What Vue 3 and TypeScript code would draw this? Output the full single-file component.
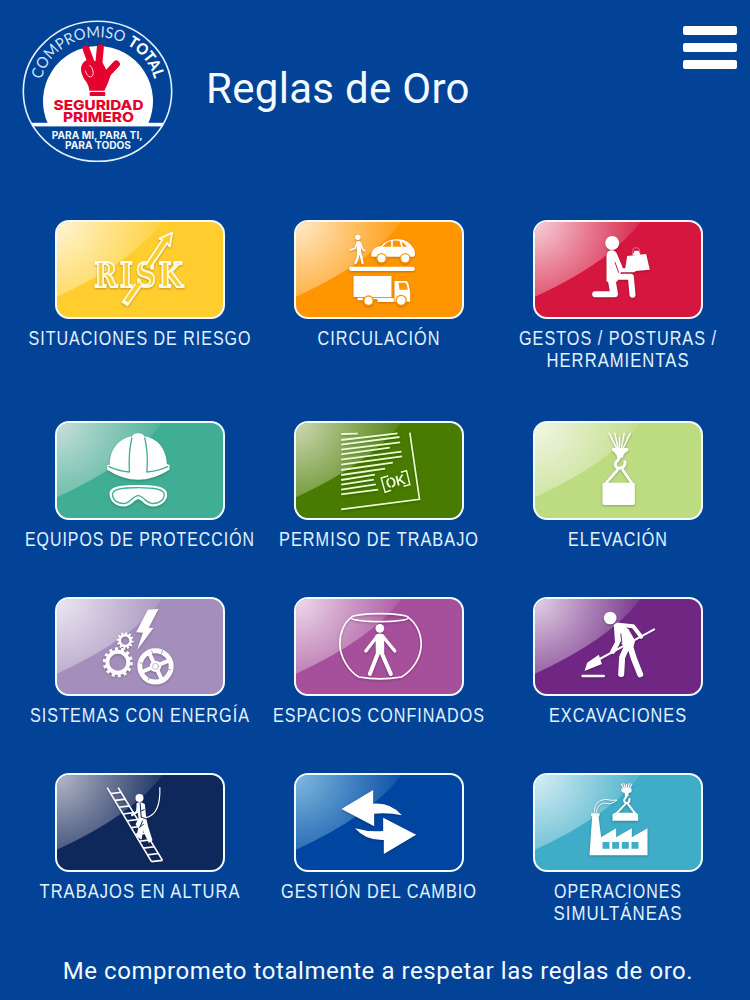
<template>
  <div class="page">
    <header class="header">
      <svg class="logo" viewBox="20 18 156 146" width="156" height="146">
        <defs>
          <path id="logo-arc" d="M41.5 79.5A58 54.5 0 0 1 154.5 79.5" />
        </defs>
        <ellipse class="ring" cx="97.5" cy="91.3" rx="74.2" ry="70" />
        <path class="white" d="M48 124A55 55 0 1 1 148 124Z" />
        <rect class="white" x="32" y="122.8" width="131" height="3.6" />
        <text class="arc-light" textLength="102" lengthAdjust="spacingAndGlyphs">
          <textPath href="#logo-arc">COMPROMISO</textPath>
        </text>
        <text class="arc-bold" textLength="45" lengthAdjust="spacingAndGlyphs">
          <textPath href="#logo-arc" startOffset="106">TOTAL</textPath>
        </text>
        <!-- Hand with three raised fingers -->
        <g transform="translate(10 10) scale(0.3333)">
          <path class="finger" d="M228 116L250 176M271 113L265 176M319 162L280 204" />
          <path class="red" d="M218 160Q232 142 250 152L278 158L292 186L306 182Q296 218 283 242H238Q237 224 222 206Q206 180 218 160Z" />
          <path class="crease" d="M226 182Q230 198 241 201Q252 199 249 183Q246 170 238 165" />
          <rect class="red" x="239" y="246" width="47" height="12" rx="3" />
        </g>
        <text class="safety" x="98.5" y="110" textLength="90" lengthAdjust="spacingAndGlyphs">SEGURIDAD</text>
        <text class="safety" x="98.5" y="122.3" textLength="71" lengthAdjust="spacingAndGlyphs">PRIMERO</text>
        <text class="motto" x="97.2" y="139" textLength="91" lengthAdjust="spacingAndGlyphs">PARA MI, PARA TI,</text>
        <text class="motto" x="98" y="149.4" textLength="66" lengthAdjust="spacingAndGlyphs">PARA TODOS</text>
      </svg>
      <h1 class="title">Reglas de Oro</h1>
      <button class="menu" aria-label="Menú" @click="menuOpen = !menuOpen">
        <span></span>
        <span></span>
        <span></span>
      </button>
    </header>

    <main class="rules">
      <div v-for="rule in rules" :key="rule.id" class="rule">
        <div class="tile" :class="rule.id">
          <svg class="icon" :viewBox="rule.viewBox" width="170" height="99">
            <g v-if="rule.id === 'risk'">
              <text class="risk-text" transform="scale(0.84 1)" x="191 283 340 421" y="231">RISK</text>
              <path class="outline" d="M252 283L292 226M322 170L377 88" />
              <path class="inner" d="M258 274L295 221M319 174L377 88" />
              <path class="hollow" d="M356 86L395 68L388 110L379 99L366 90Z" />
              <path class="inner" d="M360 113L375 91" />
            </g>

            <g v-else-if="rule.id === 'traffic'">
              <circle cx="232" cy="82" r="8" />
              <path class="s5" d="M229 99L224 115L209 120M240 99L246 117L252 122" />
              <path class="s12" d="M234 99L236 126" />
              <path class="s7" d="M233 128L232 142L225 159M238 128L243 142L246 159" />
              <path d="M272 136C273 117 288 110 302 108C315 92 335 88 352 88C378 88 390 103 396 111C404 119 406 138 400 140H273Z" />
              <path class="cut" d="M306 110L318 98Q326 94 332 93V110ZM337 92Q350 91 357 93L362 110H337ZM363 95Q373 99 379 110H367Z" />
              <circle class="wheel" cx="303" cy="145" r="14" />
              <circle class="wheel" cx="374" cy="145" r="14" />
              <rect x="206" y="170" width="197" height="13" rx="6" />
              <path d="M219 198H333V261H219ZM342 213H376Q384 214 386 231L389 245V275H342Z" />
              <path class="cut" d="M354 218H374Q379 220 382 239H357Z" />
              <path d="M231 263H247V271H231ZM278 263H333V268H278ZM291 265H340V276H291Z" />
              <circle class="wheel" cx="264" cy="272" r="14" />
              <circle class="wheel" cx="362" cy="271" r="15" />
            </g>

            <g v-else-if="rule.id === 'gestures'">
              <circle cx="305" cy="99" r="21" />
              <path d="M288 138Q289 122 303 121Q316 121 320 134L336 172L330 190L320 215H288Z" />
              <path class="s12" d="M314 135L332 181H370" />
              <path class="s18" d="M300 200H361L366 254" />
              <path class="s24" d="M302 200L310 247" />
              <path class="s18" d="M254 253H313" />
              <path class="slit" d="M314 158L324 187" />
              <path d="M350 138L407 132L418 179L375 183L344 176Z" />
              <path class="handle" d="M366 134V124Q368 113 378 113Q388 114 388 131" />
              <path d="M366 136L372 122H384L390 134Z" />
            </g>

            <g v-else-if="rule.id === 'protection'">
              <path d="M208 162C208 112 240 82 275 77Q278 68 293 68Q308 68 311 77C350 82 378 115 379 160L387 163V177Q340 207 293 207Q245 207 200 177V163Z" />
              <path class="line" d="M274 82Q263 130 267 184Q235 182 205 168M313 82Q324 130 319 184Q350 182 382 168" />
              <path d="M207 250C207 230 230 223 293 223C355 223 380 230 380 252C380 277 350 291 330 287C310 283 303 266 293 266C283 266 276 283 257 287C235 291 207 277 207 250Z" />
              <path class="line" d="M216 251C216 236 240 231 293 231C346 231 371 236 371 252C371 270 350 281 332 278C315 274 307 255 293 255C279 255 271 274 255 278C236 281 216 270 216 251Z" />
            </g>

            <g v-else-if="rule.id === 'permit'">
              <path class="ruled" :d="permitLines" />
              <path class="s5 sharp" d="M388 66L417 266L182 296" />
              <path class="s4 sharp" d="M325 195L302 202L314 245L332 239M361 185L378 180L388 222L369 227" />
              <g transform="rotate(-14 345 212)">
                <text class="ok" x="345" y="227" textLength="59" lengthAdjust="spacingAndGlyphs">OK</text>
                <path class="slit" d="M329 190V234" />
              </g>
            </g>

            <g v-else-if="rule.id === 'lifting'">
              <path class="s4" d="M296 68L318 112M313 68L322 110M327 80V110M341 68L333 110M359 68L338 112" />
              <path d="M305 112H353V121Q338 128 337 141H320Q318 127 305 121Z" />
              <path class="s9" d="M327 140L321 150C308 161 316 174 328 173C339 172 345 164 343 153" />
              <path class="s8" d="M321 178L286 218M337 178L364 218" />
              <rect x="276" y="216" width="97" height="67" rx="5" />
            </g>

            <g v-else-if="rule.id === 'energy'">
              <path d="M322 59L354 57L325 113L339 114L290 180L307 128L287 127Z" />
              <circle class="s8" cx="254" cy="152" r="16.500" />
              <circle class="teeth" cx="254" cy="152" r="22" pathLength="120" stroke-dasharray="5 5" />
              <circle class="s12" cx="232" cy="217" r="31.500" />
              <circle class="teeth big" cx="232" cy="217" r="40" pathLength="140" stroke-dasharray="5 5" />
              <circle class="s16" cx="345" cy="229" r="47" />
              <path class="s12" d="M325 187L365 271M303 246L387 211" />
              <circle cx="345" cy="229" r="17" />
              <circle class="hub" cx="345" cy="229" r="9" />
              <path class="notch" d="M333 182L338 193M366 181L363 192M323 270L327 260M391 240L380 237M298 218L309 221" />
            </g>

            <g v-else-if="rule.id === 'confined'">
              <ellipse class="s5" cx="298" cy="83" rx="86" ry="12" />
              <path class="s5" d="M212 83C191 98 178 128 178 162C178 200 205 244 235 261Q298 272 363 261C398 240 422 202 422 162C422 128 405 98 384 83" />
              <circle cx="298" cy="115" r="13" />
              <path class="s10" d="M291 138L256 183M306 138L343 183" />
              <path d="M285 135Q298 126 311 135V190H286Z" />
              <path class="s12" d="M293 188L268 252M303 188L331 252" />
            </g>

            <g v-else-if="rule.id === 'digging'">
              <circle cx="299" cy="84" r="19" />
              <path class="s12" d="M322 104L368 109L392 140" />
              <path d="M309 108Q314 96 330 99L354 118L374 152L369 170H340L326 150Z" />
              <path class="s16" d="M318 114L321 158L307 184" />
              <path class="s18" d="M353 162L335 202L332 252M357 162L370 205L389 253" />
              <path class="slit" d="M331 132L334 158" />
              <path class="s6" d="M431 118L262 210" />
              <path d="M265 194L274 222L222 243L230 218Z" />
              <path class="s7" d="M216 258H280" />
            </g>

            <g v-else-if="rule.id === 'heights'">
              <path class="s5 sharp" :d="ladder" />
              <circle cx="297" cy="99" r="12" />
              <path class="s7" d="M292 119L290 140L275 150" />
              <path d="M288 115Q300 108 313 117L317 158L323 185L336 226L325 234L308 198L303 224L288 214L293 190L285 178L294 160Z" />
              <path class="slit" d="M299 116L302 156M311 134L301 138M302 156L317 162M306 168L299 185M296 188L309 178" />
              <path class="s3" d="M358 68Q361 148 316 158" />
            </g>

            <g v-else-if="rule.id === 'change'">
              <path d="M903 132L998 75V116Q1052 112 1084 151Q1045 142 1001 146V184Z" />
              <path d="M944 190Q985 202 1028 198V158L1127 209L1030 267V225Q974 227 944 190Z" />
            </g>

            <g v-else-if="rule.id === 'operations'">
              <path d="M237 271L245 154H242V145H267V154H264L272 217L317 190V217L364 190V217L411 190V271Z" />
              <path class="cut" d="M276 231H297V251H276ZM305 231H326V251H305ZM334 231H355V251H334ZM363 231H384V251H363Z" />
              <path class="s2" d="M251 142Q251 105 286 103Q303 108 320 105Q304 121 283 114Q260 116 257 142" />
              <path class="s3" d="M332 57L341 72M340 56L345 72M348 58V72M356 56L352 72M364 57L356 72" />
              <path d="M333 70H363V81L354 85V94H343V85L333 80Z" />
              <path class="s6" d="M348 94L343 101C336 111 350 119 356 110L357 102" />
              <path class="s6" d="M344 118L315 148M353 118L376 148" />
              <path d="M306 148L314 143H375L383 148V167H306Z" />
            </g>
          </svg>
        </div>
        <svg class="label" :height="rule.lines.length * 22 + 6" width="239">
          <text
            v-for="(line, index) in rule.lines"
            :key="line.text"
            x="120"
            :y="20 + index * 22.3"
            :textLength="line.width + 1"
            lengthAdjust="spacingAndGlyphs"
          >{{ line.text }}</text>
        </svg>
      </div>
    </main>

    <footer class="pledge">Me comprometo totalmente a respetar las reglas de oro.</footer>
  </div>
</template>

<script setup lang="ts">
import { ref } from 'vue'

interface Line {
  text: string
  width: number
}

interface Rule {
  id: string
  viewBox: string
  lines: Line[]
}

const menuOpen = ref<boolean>(false)

const rules: Rule[] = [
  { id: 'risk', viewBox: '43.5 30 510 297', lines: [{ text: 'SITUACIONES DE RIESGO', width: 222 }] },
  { id: 'traffic', viewBox: '40.5 30 510 297', lines: [{ text: 'CIRCULACIÓN', width: 122 }] },
  {
    id: 'gestures',
    viewBox: '67.5 30 510 297',
    lines: [
      { text: 'GESTOS / POSTURAS /', width: 197 },
      { text: 'HERRAMIENTAS', width: 142 },
    ],
  },
  { id: 'protection', viewBox: '43.5 31 510 297', lines: [{ text: 'EQUIPOS DE PROTECCIÓN', width: 229 }] },
  { id: 'permit', viewBox: '40.5 31 510 297', lines: [{ text: 'PERMISO DE TRABAJO', width: 199 }] },
  { id: 'lifting', viewBox: '67.5 31 510 297', lines: [{ text: 'ELEVACIÓN', width: 99 }] },
  { id: 'energy', viewBox: '43.5 21 510 297', lines: [{ text: 'SISTEMAS CON ENERGÍA', width: 219 }] },
  { id: 'confined', viewBox: '40.5 21 510 297', lines: [{ text: 'ESPACIOS CONFINADOS', width: 211 }] },
  { id: 'digging', viewBox: '67.5 21 510 297', lines: [{ text: 'EXCAVACIONES', width: 137 }] },
  { id: 'heights', viewBox: '43.5 24 510 297', lines: [{ text: 'TRABAJOS EN ALTURA', width: 200 }] },
  { id: 'change', viewBox: '760.5 24 510 297', lines: [{ text: 'GESTIÓN DEL CAMBIO', width: 195 }] },
  {
    id: 'operations',
    viewBox: '67.5 24 510 297',
    lines: [
      { text: 'OPERACIONES', width: 127 },
      { text: 'SIMULTÁNEAS', width: 128 },
    ],
  },
]

// Written lines of the permit: [left y, right x, right y]
const permitLines = [
  [70, 232, 69],
  [88, 351, 68],
  [102, 357, 79],
  [117, 359, 95],
  [131, 328, 111],
  [147, 363, 123],
  [162, 365, 137],
  [178, 337, 156],
  [193, 314, 174],
  [208, 283, 192],
  [222, 280, 207],
  [237, 286, 221],
  [251, 293, 237],
]
  .map(([y1, x2, y2]) => `M182 ${y1}L${x2} ${y2}`)
  .join('')

// Two rails and the rungs between them
const rungs = Array.from({ length: 11 }, (_, i) => {
  const t = 0.08 + i * 0.092
  return `M${200 + 133 * t} ${68 + 222 * t}L${233 + 133 * t} ${64 + 222 * t}`
}).join('')
const ladder = `M200 68L333 290M233 68L366 286${rungs}`
</script>

<style>
body {
  background-color: #024397;
}
</style>

<style scoped>
.page {
  display: flex;
  flex-direction: column;
  width: 750px;
  height: 1000px;
  overflow: hidden;
  background-color: #024397;
  color: #f4faff;
  font-family: Roboto, sans-serif;
}

.header {
  display: flex;
  flex: none;
  align-items: flex-start;
  box-sizing: border-box;
  height: 202px;
  padding: 18px 13px 0 20px;
}

.logo {
  flex: none;
}

.ring {
  fill: none;
  stroke: #e4f1fc;
  stroke-width: 1.6;
}

.white {
  fill: #fff;
}

.red {
  fill: #e4032e;
}

.finger {
  fill: none;
  stroke: #e4032e;
  stroke-width: 21;
  stroke-linecap: round;
}

.crease {
  fill: none;
  stroke: #fff;
  stroke-width: 2.5;
}

.arc-light,
.arc-bold {
  font-family: Lato, sans-serif;
  font-size: 15.5px;
  font-weight: 400;
  fill: #cfe4f7;
}

.arc-bold {
  font-weight: 900;
  fill: #fff;
}

.safety,
.motto {
  font-family: Inter, sans-serif;
  font-size: 13.6px;
  font-weight: 800;
  text-anchor: middle;
  fill: #e4032e;
}

.motto {
  font-size: 10px;
  font-weight: 700;
  fill: #f0f7ff;
}

.title {
  flex: 1;
  margin: 46px 0 0 30px;
  font-size: 42px;
  font-weight: 400;
  line-height: 50px;
  letter-spacing: 0.3px;
  white-space: nowrap;
}

.menu {
  display: flex;
  flex-direction: column;
  gap: 8.5px;
  width: 54px;
  margin-top: 8px;
  padding: 0;
  border: none;
  background: none;
  cursor: pointer;
}

.menu span {
  height: 8.5px;
  border-radius: 2px;
  background-color: #fff;
}

.rules {
  display: grid;
  flex: none;
  grid-template-columns: repeat(3, 239px);
  grid-template-rows: 200.5px 176.5px 176px 174px;
  padding: 18px 0 0 20px;
}

.rule {
  display: flex;
  flex-direction: column;
  align-items: center;
}

.tile {
  position: relative;
  box-sizing: border-box;
  width: 170px;
  height: 99px;
  flex: none;
  border: 2px solid #f3faff;
  border-radius: 14px;
  overflow: hidden;
  background-color: var(--tile);
  --gloss: 255, 255, 255;
}

/* Glossy highlight in the top left corner */
.tile::before {
  content: '';
  position: absolute;
  inset: 0;
  clip-path: path('M0 0H106Q76 40 0 75Z');
  background: radial-gradient(circle at 0 0, rgba(var(--gloss), 0.8), rgba(var(--gloss), 0.45) 50px, rgba(var(--gloss), 0.08) 106px);
}

.risk { --tile: #ffcd2e; }
.traffic { --tile: #ff9500; }
.gestures { --tile: #d5173f; }
.protection { --tile: #40ae94; }
.permit { --tile: #487b00; }
.lifting { --tile: #bddb81; }
.energy { --tile: #a48fbc; }
.confined { --tile: #a64f9b; }
.digging { --tile: #702783; }
.heights { --tile: #0f285c; }
.change { --tile: #0046a0; }
.operations { --tile: #3facc8; }
.tile.heights { --gloss: 225, 220, 225; }
.tile.change { --gloss: 160, 215, 240; }
.tile.protection { --gloss: 235, 235, 235; }
.tile.permit { --gloss: 240, 240, 225; }

.icon {
  position: relative;
  display: block;
  margin: -2px;
  fill: #fff;
  stroke-linecap: round;
  stroke-linejoin: round;
  filter: drop-shadow(0.7px 1px 0.8px rgba(0, 0, 0, 0.25));
}

.s2, .s3, .s4, .s5, .s6, .s7, .s8, .s9, .s10, .s12, .s16, .s18, .s24 {
  fill: none;
  stroke: #fff;
}

.s2 { stroke-width: 2.5; }
.s3 { stroke-width: 3.5; }
.s4 { stroke-width: 4.5; }
.s5 { stroke-width: 5; }
.s6 { stroke-width: 6; }
.s7 { stroke-width: 7; }
.s8 { stroke-width: 8; }
.s9 { stroke-width: 9; }
.s10 { stroke-width: 10; }
.s12 { stroke-width: 12; }
.s16 { stroke-width: 15; }
.s18 { stroke-width: 18; }
.s24 { stroke-width: 23; }

.sharp {
  stroke-linecap: butt;
  stroke-linejoin: miter;
}

.cut {
  fill: var(--tile);
}

.wheel {
  stroke: var(--tile);
  stroke-width: 4;
}

.slit,
.line {
  fill: none;
  stroke: var(--tile);
  stroke-width: 3;
}

.line {
  stroke-width: 4;
}

.handle {
  fill: none;
  stroke: #ee5266;
  stroke-width: 4;
}

.outline {
  fill: none;
  stroke: #fffbe6;
  stroke-width: 23;
  stroke-linecap: butt;
}

.inner {
  fill: none;
  stroke: var(--tile);
  stroke-width: 12;
  stroke-linecap: butt;
}

.hollow {
  fill: var(--tile);
  stroke: #fffbe6;
  stroke-width: 5.5;
}

.risk-text {
  font-family: 'DejaVu Serif', serif;
  font-size: 100px;
  font-weight: 700;
  fill: var(--tile);
  stroke: #fffbe6;
  stroke-width: 6;
}

.ruled {
  fill: none;
  stroke: #eaffd0;
  stroke-width: 5.5;
  stroke-linecap: butt;
}

.permit .s4,
.permit .s5 {
  stroke: #eaffd0;
}

.ok {
  font-family: 'Liberation Sans', sans-serif;
  font-size: 43px;
  font-weight: 700;
  text-anchor: middle;
  fill: #eaffd0;
}

.teeth {
  fill: none;
  stroke: #fff;
  stroke-width: 7;
  stroke-linecap: butt;
}

.teeth.big {
  stroke-width: 10;
}

.hub {
  fill: none;
  stroke: var(--tile);
  stroke-width: 2;
}

.notch {
  stroke: var(--tile);
  stroke-width: 2.5;
}

.label {
  display: block;
  margin-top: 6px;
  flex: none;
  overflow: visible;
}

.label text {
  font-family: 'Liberation Sans Narrow', 'Liberation Sans', Arial, sans-serif;
  font-size: 21px;
  letter-spacing: 1.3px;
  text-anchor: middle;
  fill: #e0f2ff;
}

.pledge {
  padding: 9px 0 0 6px;
  font-size: 24px;
  line-height: 30px;
  letter-spacing: 0.56px;
  text-align: center;
  white-space: nowrap;
}
</style>
